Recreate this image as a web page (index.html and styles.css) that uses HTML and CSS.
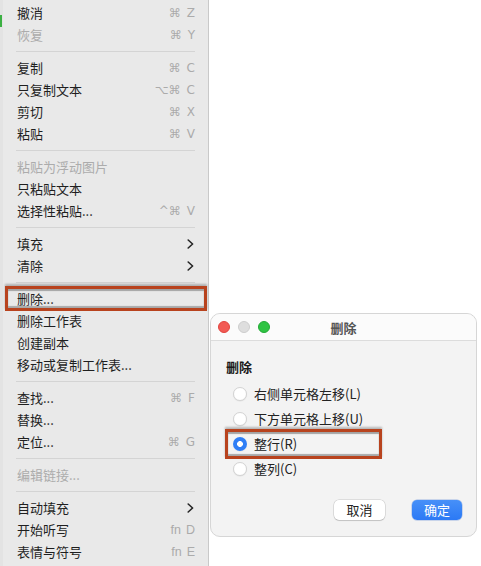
FILE: index.html
```html
<!DOCTYPE html>
<html lang="zh-CN">
<head>
<meta charset="utf-8">
<title>删除</title>
<link rel="stylesheet" href="styles.css">
</head>
<body>
<div class="page">
  <div class="menu">
    <div class="item"><span>撤消</span><span class="sc"><span>⌘</span><span>Z</span></span></div>
    <div class="item off"><span>恢复</span><span class="sc"><span>⌘</span><span>Y</span></span></div>
    <div class="sep"></div>
    <div class="item"><span>复制</span><span class="sc"><span>⌘</span><span>C</span></span></div>
    <div class="item"><span>只复制文本</span><span class="sc"><span>⌥⌘</span><span>C</span></span></div>
    <div class="item"><span>剪切</span><span class="sc"><span>⌘</span><span>X</span></span></div>
    <div class="item"><span>粘贴</span><span class="sc"><span>⌘</span><span>V</span></span></div>
    <div class="sep"></div>
    <div class="item off"><span>粘贴为浮动图片</span></div>
    <div class="item"><span>只粘贴文本</span></div>
    <div class="item"><span>选择性粘贴...</span><span class="sc"><span>^⌘</span><span>V</span></span></div>
    <div class="sep"></div>
    <div class="item"><span>填充</span><svg class="chev" width="7" height="10" viewBox="0 0 7 10"><polyline points="1.2,1 5.6,5 1.2,9" fill="none" stroke="#262626" stroke-width="1.6" stroke-linecap="round" stroke-linejoin="round"/></svg></div>
    <div class="item"><span>清除</span><svg class="chev" width="7" height="10" viewBox="0 0 7 10"><polyline points="1.2,1 5.6,5 1.2,9" fill="none" stroke="#262626" stroke-width="1.6" stroke-linecap="round" stroke-linejoin="round"/></svg></div>
    <div class="sep"></div>
    <div class="item"><span>删除...</span></div>
    <div class="item"><span>删除工作表</span></div>
    <div class="item"><span>创建副本</span></div>
    <div class="item"><span>移动或复制工作表...</span></div>
    <div class="sep"></div>
    <div class="item"><span>查找...</span><span class="sc"><span>⌘</span><span>F</span></span></div>
    <div class="item"><span>替换...</span></div>
    <div class="item"><span>定位...</span><span class="sc"><span>⌘</span><span>G</span></span></div>
    <div class="sep"></div>
    <div class="item off"><span>编辑链接...</span></div>
    <div class="sep"></div>
    <div class="item"><span>自动填充</span><svg class="chev" width="7" height="10" viewBox="0 0 7 10"><polyline points="1.2,1 5.6,5 1.2,9" fill="none" stroke="#262626" stroke-width="1.6" stroke-linecap="round" stroke-linejoin="round"/></svg></div>
    <div class="item"><span>开始听写</span><span class="sc fn"><span>fn</span><span>D</span></span></div>
    <div class="item"><span>表情与符号</span><span class="sc fn"><span>fn</span><span>E</span></span></div>
  </div>

  <div class="pane">
    <div class="dialog">
      <div class="titlebar">
        <div class="lights">
          <span class="light red"></span>
          <span class="light gray"></span>
          <span class="light green"></span>
        </div>
        <div class="title">删除</div>
        <div></div>
      </div>
      <div class="body">
        <div class="label">删除</div>
        <div class="radio"><span class="dot"></span><span>右侧单元格左移(L)</span></div>
        <div class="radio"><span class="dot"></span><span>下方单元格上移(U)</span></div>
        <div class="radio"><span class="dot on"></span><span>整行(R)</span></div>
        <div class="radio"><span class="dot"></span><span>整列(C)</span></div>
        <div class="buttons">
          <button class="btn">取消</button>
          <button class="btn primary">确定</button>
        </div>
      </div>
    </div>
  </div>

  <div class="edge-mark"></div>
  <div class="mark mark-menu"></div>
  <div class="mark mark-radio"></div>
</div>
</body>
</html>
```

FILE: styles.css
```css
* { box-sizing: border-box; }

html, body {
  margin: 0;
  padding: 0;
  background: #ffffff;
}

body {
  font-family: "Noto Sans CJK SC", "Liberation Sans", sans-serif;
  font-size: 13px;
  color: #1f1f1f;
}

.page {
  position: relative;
  display: flex;
  width: 481px;
  height: 566px;
  overflow: hidden;
}

.menu {
  width: 209px;
  height: 566px;
  flex: none;
  background: #e9e9e9;
  border-left: 3px solid #e3e3e3;
  border-right: 1px solid #c9c9c9;
  padding-top: 2px;
}

.item {
  height: 22px;
  line-height: 22px;
  display: flex;
  align-items: center;
  justify-content: space-between;
  padding: 0 13px 0 14px;
  white-space: nowrap;
}

.item.off { color: #acacac; }

.sc {
  display: flex;
  gap: 6px;
  color: #ababab;
  font-family: "DejaVu Sans", "Liberation Sans", sans-serif;
  font-size: 12px;
}

.sc.fn {
  font-family: "Liberation Sans", sans-serif;
  font-size: 12.5px;
  gap: 5px;
}

.chev { margin-right: 1px; }

.sep {
  height: 11px;
  display: flex;
  align-items: center;
  padding: 0 13px 0 13px;
}

.sep::after {
  content: "";
  display: block;
  width: 100%;
  height: 1px;
  background: #d4d4d4;
}

.pane {
  flex: 1;
  padding: 313px 0 0 1px;
}

.dialog {
  width: 267px;
  border: 1px solid #d6d6d6;
  border-radius: 10px;
  background: #f3f3f3;
  overflow: hidden;
}

.titlebar {
  height: 27px;
  background: #fbfbfb;
  border-bottom: 1px solid #dcdcdc;
  display: grid;
  grid-template-columns: 1fr auto 1fr;
  align-items: center;
}

.lights {
  display: flex;
  gap: 8px;
  padding-left: 7px;
}

.light {
  width: 12px;
  height: 12px;
  border-radius: 50%;
}

.light.red { background: #f25a54; border: 0.5px solid #e0443e; }
.light.gray { background: #dedede; border: 0.5px solid #cdcdcd; }
.light.green { background: #2fc443; border: 0.5px solid #24a937; }

.title {
  color: #555555;
  font-weight: bold;
  font-size: 13px;
}

.body {
  padding: 16px 14px 16px 15px;
}

.label {
  height: 20px;
  line-height: 20px;
  font-weight: bold;
  margin-bottom: 4px;
  color: #1a1a1a;
}

.radio {
  height: 25px;
  display: flex;
  align-items: center;
  gap: 7px;
  padding-left: 7px;
  color: #222222;
}

.dot {
  width: 14px;
  height: 14px;
  border-radius: 50%;
  background: #ffffff;
  border: 1px solid #d3d3d3;
  box-shadow: 0 0.5px 1px rgba(0, 0, 0, 0.08);
  flex: none;
}

.dot.on {
  border: none;
  background: radial-gradient(circle, #ffffff 0 2.6px, #2f7ef6 3.2px);
}

.buttons {
  display: flex;
  justify-content: flex-end;
  gap: 27px;
  margin-top: 19px;
}

.btn {
  width: 51px;
  height: 20px;
  border: none;
  border-radius: 5px;
  font-family: "Noto Sans CJK SC", "Liberation Sans", sans-serif;
  font-size: 13px;
  line-height: 20px;
  padding: 0;
  background: #ffffff;
  color: #222222;
  box-shadow: 0 0 0 0.5px rgba(0, 0, 0, 0.18), 0 1px 1px rgba(0, 0, 0, 0.12);
}

.btn.primary {
  width: 50px;
  color: #ffffff;
  background: linear-gradient(#4790f8, #2b79f5);
  box-shadow: 0 0 0 0.5px rgba(30, 90, 200, 0.4);
}

.edge-mark {
  position: absolute;
  left: 0;
  top: 15px;
  width: 2px;
  height: 12px;
  background: #3cb043;
}

.mark {
  position: absolute;
  border: 3px solid #b8431e;
  box-shadow:
    inset 0 2px 1px #a3a3a3,
    inset 0 -2px 1px #a8a8a8,
    0 -2px 2px rgba(0, 0, 0, 0.25);
}

.mark-menu {
  left: 5px;
  top: 286px;
  width: 202px;
  height: 25px;
}

.mark-radio {
  left: 225px;
  top: 429px;
  width: 157px;
  height: 30px;
}
```
